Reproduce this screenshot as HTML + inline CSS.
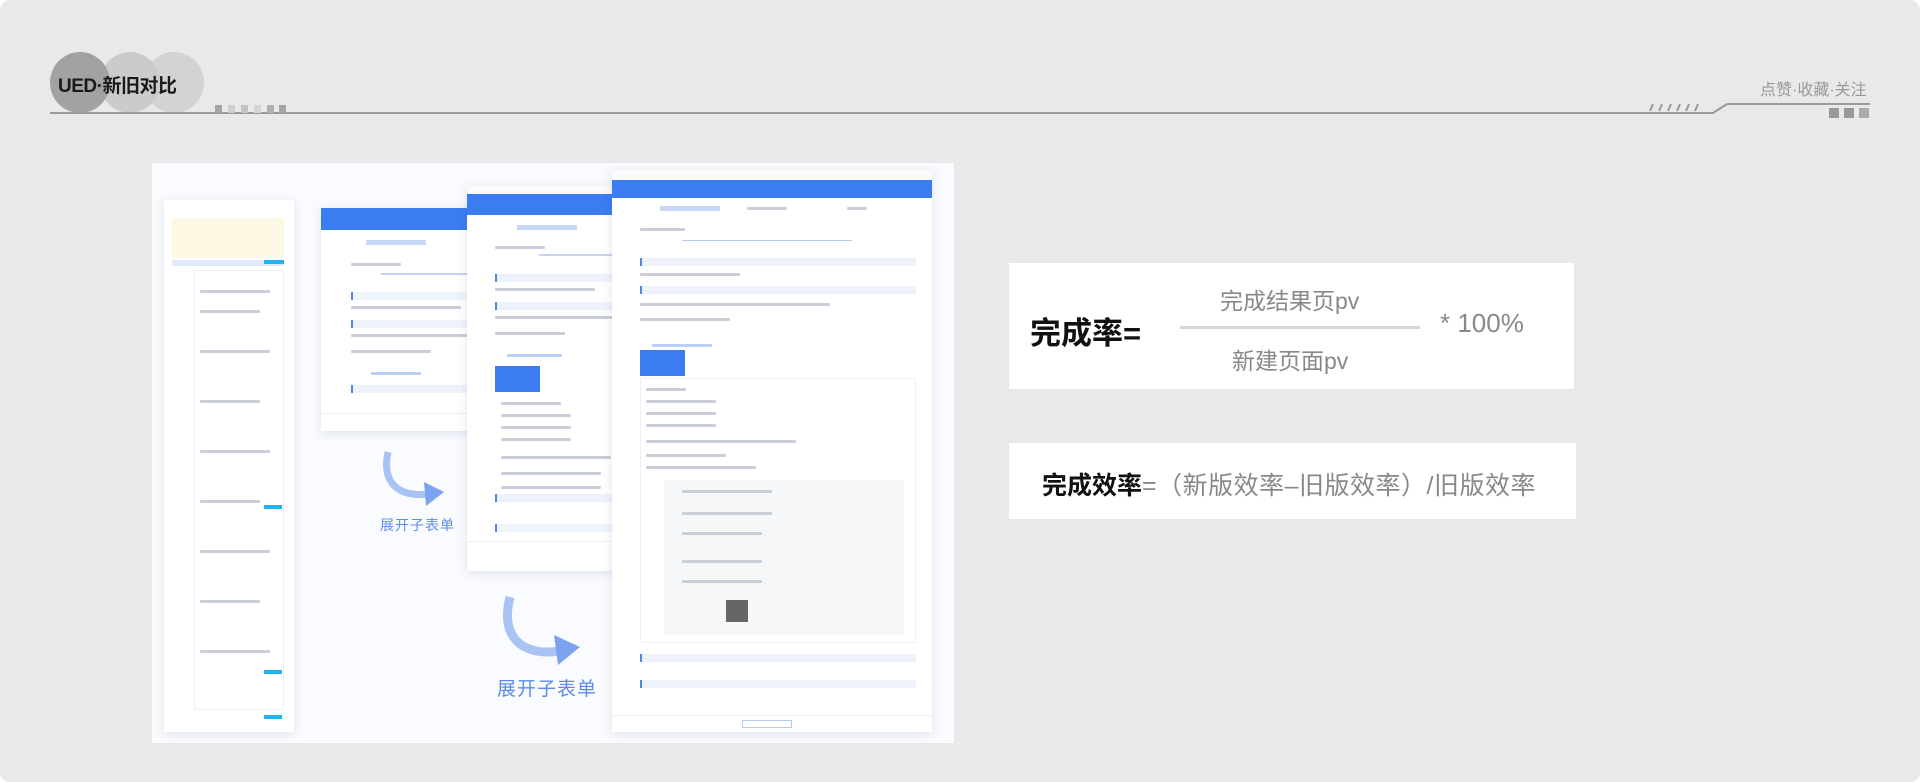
<!DOCTYPE html>
<html><head><meta charset="utf-8"><style>
*{margin:0;padding:0;box-sizing:border-box}
body{width:1920px;height:782px;background:#fff;font-family:"Liberation Sans","Noto Sans CJK SC",sans-serif;position:relative;overflow:hidden}
.bg{position:absolute;left:0;top:0;width:1920px;height:782px;background:#e9e9e9;border-radius:10px}
.a{position:absolute}
.circ{position:absolute;width:60px;height:61px;border-radius:50%}
.panel{position:absolute;background:#fff;box-shadow:0 2px 10px rgba(60,90,150,.15);overflow:hidden}
.hdr{position:absolute;left:0;right:0;background:#3b7cf0}
.ln{position:absolute;height:3px;background:#c9ced8;border-radius:1px}
.sec{position:absolute;height:8px;background:#eef3fb;border-left:2px solid #4f86e8}
.arrowtxt{position:absolute;color:#5b8de8;font-size:14px;letter-spacing:1px}
</style></head><body>
<div class="bg"></div>
<!-- header -->
<div class="circ" style="left:144px;top:52px;background:#d3d3d3"></div>
<div class="circ" style="left:100px;top:52px;background:#cbcbcb"></div>
<div class="circ" style="left:50px;top:52px;background:#a2a2a2"></div>
<div class="a" style="left:58px;top:71px;font-size:19px;font-weight:600;color:#1a1a1a;letter-spacing:-0.5px">UED·新旧对比</div>
<div class="a" style="left:50px;top:112px;width:1664px;height:2px;background:#9a9a9a"></div>
<svg class="a" style="left:1640px;top:100px" width="240" height="20"><g stroke="#9a9a9a" stroke-width="2"><line x1="10" y1="11" x2="13" y2="4"/><line x1="19" y1="11" x2="22" y2="4"/><line x1="28" y1="11" x2="31" y2="4"/><line x1="37" y1="11" x2="40" y2="4"/><line x1="46" y1="11" x2="49" y2="4"/><line x1="55" y1="11" x2="58" y2="4"/><line x1="73" y1="13" x2="87" y2="4"/><line x1="87" y1="4" x2="230" y2="4"/></g></svg>
<div class="a" style="left:1829px;top:108px;width:10px;height:10px;background:#999"></div>
<div class="a" style="left:1844px;top:108px;width:10px;height:10px;background:#999"></div>
<div class="a" style="left:1859px;top:108px;width:10px;height:10px;background:#aaa"></div>
<div class="a" style="left:215px;top:105px;width:7px;height:8px;background:#a5a5a5"></div>
<div class="a" style="left:228px;top:105px;width:7px;height:8px;background:#cfcfcf"></div>
<div class="a" style="left:241px;top:105px;width:7px;height:8px;background:#c5c5c5"></div>
<div class="a" style="left:254px;top:105px;width:7px;height:8px;background:#d5d5d5"></div>
<div class="a" style="left:267px;top:105px;width:7px;height:8px;background:#b0b0b0"></div>
<div class="a" style="left:279px;top:105px;width:7px;height:8px;background:#a5a5a5"></div>
<div class="a" style="left:1760px;top:76px;font-size:16px;color:#999">点赞·收藏·关注</div>

<!-- screenshot area -->
<div class="a" style="left:152px;top:163px;width:802px;height:580px;background:#fafbfe"></div>
<!-- panel A -->
<div class="panel" style="left:164px;top:200px;width:130px;height:532px">
  <div class="a" style="left:8px;top:18px;width:112px;height:40px;background:#fdf8e4"></div>
  <div class="a" style="left:8px;top:60px;width:112px;height:6px;background:#dfe9fb"></div>
  <div class="a" style="left:100px;top:60px;width:20px;height:4px;background:#1fb6f0"></div>
  <div class="a" style="left:30px;top:70px;width:90px;height:440px;border:1px solid #eef0f4"></div>
  <div class="ln" style="left:36px;top:90px;width:70px"></div><div class="ln" style="left:36px;top:110px;width:60px"></div>
  <div class="ln" style="left:36px;top:150px;width:70px"></div><div class="ln" style="left:36px;top:200px;width:60px"></div>
  <div class="ln" style="left:36px;top:250px;width:70px"></div><div class="ln" style="left:36px;top:300px;width:60px"></div>
  <div class="ln" style="left:36px;top:350px;width:70px"></div><div class="ln" style="left:36px;top:400px;width:60px"></div>
  <div class="ln" style="left:36px;top:450px;width:70px"></div>
  <div class="a" style="left:100px;top:305px;width:18px;height:4px;background:#1fb6f0"></div>
  <div class="a" style="left:100px;top:470px;width:18px;height:4px;background:#1fb6f0"></div>
  <div class="a" style="left:100px;top:515px;width:18px;height:4px;background:#1fb6f0"></div>
</div>
<!-- panel B -->
<div class="panel" style="left:321px;top:208px;width:160px;height:223px">
  <div class="hdr" style="top:0;height:22px"></div>
  <div class="a" style="left:45px;top:32px;width:60px;height:5px;background:#c8d7f5"></div>
  <div class="ln" style="left:30px;top:55px;width:50px"></div>
  <div class="a" style="left:60px;top:65px;width:100px;height:2px;background:#c4d3f2"></div>
  <div class="sec" style="left:30px;top:84px;width:130px"></div>
  <div class="ln" style="left:30px;top:98px;width:110px"></div>
  <div class="sec" style="left:30px;top:112px;width:130px"></div>
  <div class="ln" style="left:30px;top:126px;width:120px"></div>
  <div class="ln" style="left:30px;top:142px;width:80px"></div>
  <div class="ln" style="left:50px;top:164px;width:50px;background:#bcd0f5"></div>
  <div class="sec" style="left:30px;top:177px;width:130px"></div>
  <div class="a" style="left:0;top:205px;width:160px;height:1px;background:#eee"></div>
</div>
<!-- panel C -->
<div class="panel" style="left:467px;top:186px;width:150px;height:385px">
  <div class="a" style="left:0;top:0;width:150px;height:8px;background:#fafafa"></div>
  <div class="hdr" style="top:8px;height:21px"></div>
  <div class="a" style="left:50px;top:39px;width:60px;height:5px;background:#c8d7f5"></div>
  <div class="ln" style="left:28px;top:60px;width:50px"></div>
  <div class="a" style="left:72px;top:68px;width:80px;height:2px;background:#c4d3f2"></div>
  <div class="sec" style="left:28px;top:88px;width:122px"></div>
  <div class="ln" style="left:28px;top:102px;width:100px"></div>
  <div class="sec" style="left:28px;top:116px;width:122px"></div>
  <div class="ln" style="left:28px;top:130px;width:120px"></div>
  <div class="ln" style="left:28px;top:146px;width:70px"></div>
  <div class="ln" style="left:40px;top:168px;width:55px;background:#bcd0f5"></div>
  <div class="a" style="left:28px;top:180px;width:45px;height:26px;background:#3b7cf0"></div>
  <div class="ln" style="left:34px;top:216px;width:60px"></div><div class="ln" style="left:34px;top:228px;width:70px"></div>
  <div class="ln" style="left:34px;top:240px;width:70px"></div><div class="ln" style="left:34px;top:252px;width:70px"></div>
  <div class="ln" style="left:34px;top:270px;width:110px"></div><div class="ln" style="left:34px;top:286px;width:100px"></div>
  <div class="ln" style="left:34px;top:300px;width:100px"></div>
  <div class="sec" style="left:28px;top:308px;width:122px"></div>
  <div class="sec" style="left:28px;top:338px;width:122px"></div>
  <div class="a" style="left:0;top:355px;width:150px;height:1px;background:#eee"></div>
</div>
<!-- panel D -->
<div class="panel" style="left:612px;top:170px;width:320px;height:562px">
  <div class="a" style="left:0;top:0;width:320px;height:10px;background:#fafafa"></div>
  <div class="hdr" style="top:10px;height:18px"></div>
  <div class="a" style="left:48px;top:36px;width:60px;height:5px;background:#c8d7f5"></div>
  <div class="ln" style="left:135px;top:37px;width:40px"></div><div class="ln" style="left:235px;top:37px;width:20px"></div>
  <div class="ln" style="left:28px;top:58px;width:45px"></div>
  <div class="a" style="left:70px;top:70px;width:170px;height:1px;background:#b8c9ef"></div>
  <div class="sec" style="left:28px;top:88px;width:276px"></div>
  <div class="ln" style="left:28px;top:103px;width:100px"></div>
  <div class="sec" style="left:28px;top:116px;width:276px"></div>
  <div class="ln" style="left:28px;top:133px;width:190px"></div>
  <div class="ln" style="left:28px;top:148px;width:90px"></div>
  <div class="ln" style="left:40px;top:174px;width:60px;background:#bcd0f5"></div>
  <div class="a" style="left:28px;top:180px;width:45px;height:26px;background:#3b7cf0"></div>
  <div class="a" style="left:28px;top:208px;width:276px;height:265px;border:1px solid #eef0f4"></div>
  <div class="ln" style="left:34px;top:218px;width:40px"></div><div class="ln" style="left:34px;top:230px;width:70px"></div>
  <div class="ln" style="left:34px;top:242px;width:70px"></div><div class="ln" style="left:34px;top:254px;width:70px"></div>
  <div class="ln" style="left:34px;top:270px;width:150px"></div><div class="ln" style="left:34px;top:284px;width:80px"></div>
  <div class="ln" style="left:34px;top:296px;width:110px"></div>
  <div class="a" style="left:52px;top:310px;width:240px;height:155px;background:#f6f7f9"></div>
  <div class="ln" style="left:70px;top:320px;width:90px"></div><div class="ln" style="left:70px;top:342px;width:90px"></div>
  <div class="ln" style="left:70px;top:362px;width:80px"></div><div class="ln" style="left:70px;top:390px;width:80px"></div>
  <div class="ln" style="left:70px;top:410px;width:80px"></div>
  <div class="a" style="left:114px;top:430px;width:22px;height:22px;background:#666"></div>
  <div class="sec" style="left:28px;top:484px;width:276px"></div>
  <div class="sec" style="left:28px;top:510px;width:276px"></div>
  <div class="a" style="left:0;top:545px;width:320px;height:1px;background:#eee"></div>
  <div class="a" style="left:130px;top:550px;width:50px;height:8px;border:1px solid #b8cbf0"></div>
</div>
<!-- arrows -->
<svg class="a" style="left:380px;top:450px" width="70" height="60"><path d="M8 2 C2 30 15 48 50 44" fill="none" stroke="#a9c4f4" stroke-width="7"/><path d="M44 32 L64 42 L46 56 Z" fill="#7ba3ef"/></svg>
<div class="arrowtxt" style="left:380px;top:515px">展开子表单</div>
<svg class="a" style="left:500px;top:595px" width="85" height="75"><path d="M10 2 C0 40 20 62 60 56" fill="none" stroke="#a9c4f4" stroke-width="9"/><path d="M54 40 L80 52 L58 70 Z" fill="#7ba3ef"/></svg>
<div class="arrowtxt" style="left:497px;top:674px;font-size:19px">展开子表单</div>

<!-- formula boxes -->
<div class="a" style="left:1009px;top:263px;width:565px;height:126px;background:#fff"></div>
<div class="a" style="left:1030px;top:308px;font-size:31px;font-weight:bold;color:#111">完成率=</div>
<div class="a" style="left:1180px;top:326px;width:240px;height:3px;background:#d8d8d8"></div>
<div class="a" style="left:1220px;top:282px;font-size:23px;color:#888">完成结果页pv</div>
<div class="a" style="left:1232px;top:342px;font-size:23px;color:#888">新建页面pv</div>
<div class="a" style="left:1440px;top:308px;font-size:26px;color:#888">* 100%</div>
<div class="a" style="left:1009px;top:443px;width:567px;height:76px;background:#fff"></div>
<div class="a" style="left:1042px;top:466px;font-size:25px;font-weight:bold;color:#111;white-space:nowrap">完成效率<span style="font-weight:normal;color:#888;letter-spacing:0.5px">=（新版效率–旧版效率）/旧版效率</span></div>
</body></html>
